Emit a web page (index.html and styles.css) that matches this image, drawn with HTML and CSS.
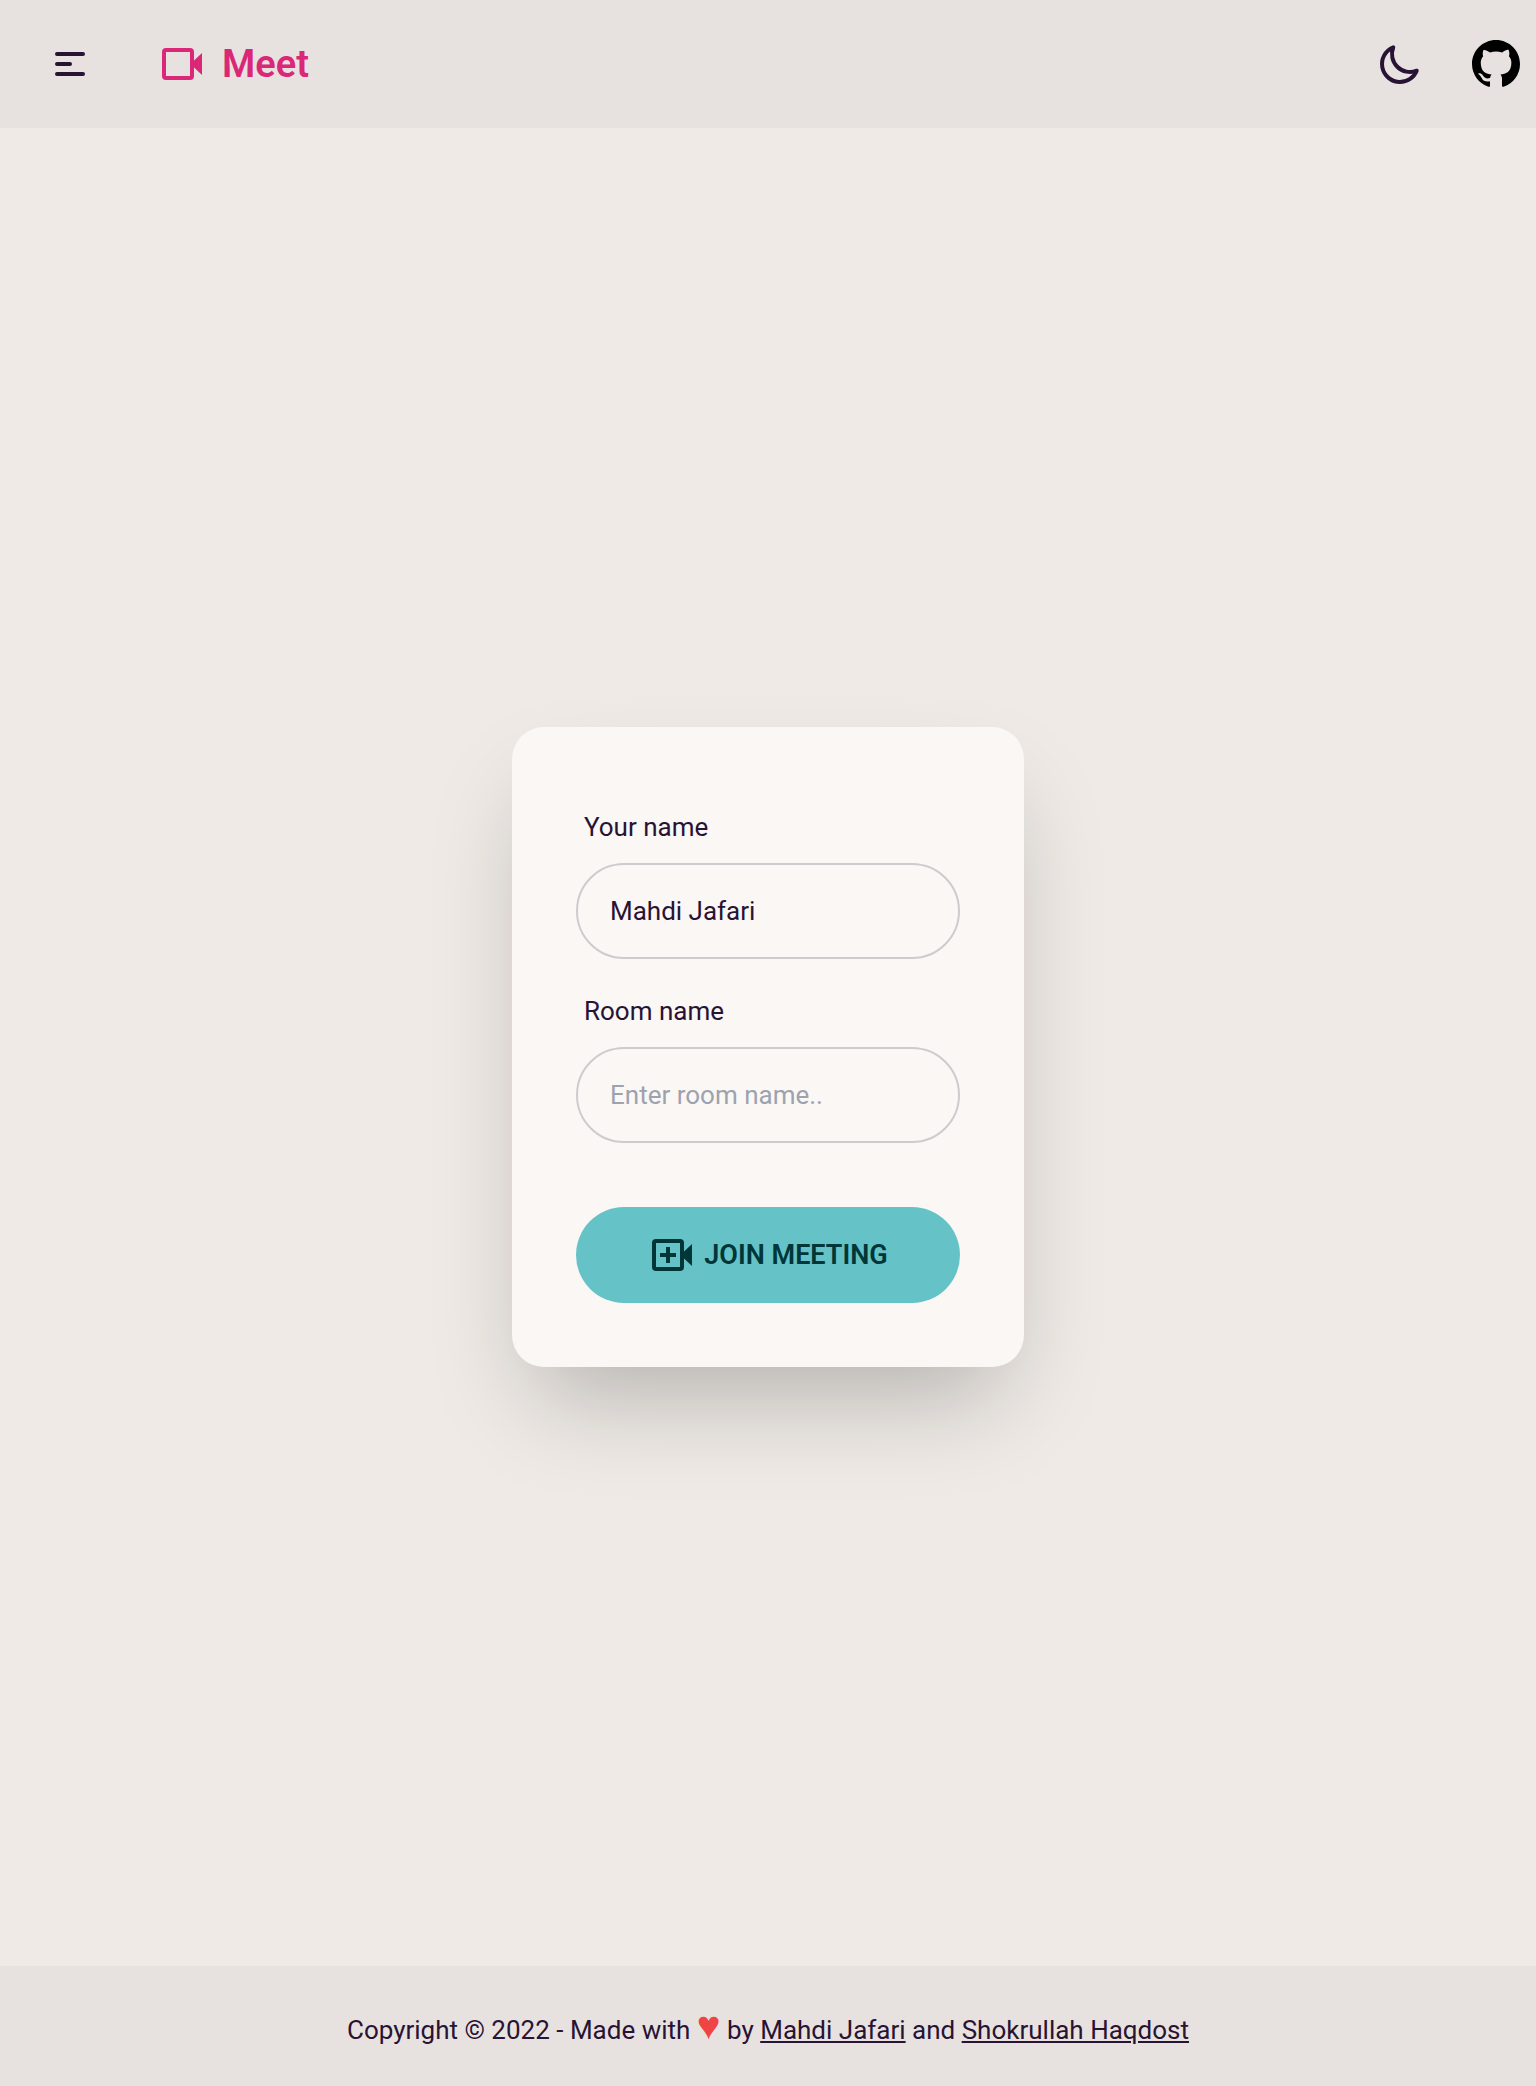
FILE: index.html
```html
<!DOCTYPE html>
<html lang="en">
<head>
<meta charset="utf-8">
<meta name="viewport" content="width=device-width, initial-scale=1">
<title>Meet</title>
<link rel="stylesheet" href="styles.css">
</head>
<body>
<header class="navbar">
  <button class="icon-button menu" type="button" aria-label="Menu">
    <svg class="icon" viewBox="0 0 48 48" fill="none" stroke="currentColor" stroke-width="4" stroke-linecap="round"><path d="M11 14h26M11 24h13M11 34h26"/></svg>
  </button>
  <a class="brand" href="#">
    <svg class="icon" viewBox="0 0 48 48" fill="none"><rect x="6" y="10" width="28" height="28" rx="2" stroke="currentColor" stroke-width="4"/><path d="M36 20.5 44 13v22l-8-7.500z" fill="currentColor"/></svg>
    <span>Meet</span>
  </a>
  <div class="actions">
    <button class="icon-button" type="button" aria-label="Toggle theme">
      <svg class="icon" viewBox="0 0 24 24" fill="none" stroke="currentColor" stroke-width="2" stroke-linecap="round" stroke-linejoin="round"><path d="M20.354 15.354A9 9 0 018.646 3.646 9.003 9.003 0 0012 21a9.003 9.003 0 008.354-5.646z"/></svg>
    </button>
    <a class="github" href="#" aria-label="GitHub">
      <svg class="icon" viewBox="0 0 16 16" fill="currentColor"><path d="M8 0C3.58 0 0 3.58 0 8c0 3.54 2.29 6.53 5.47 7.59.4.07.55-.17.55-.38 0-.19-.01-.82-.01-1.490-2.010.37-2.530-.49-2.690-.94-.09-.23-.48-.94-.82-1.130-.28-.15-.68-.52-.01-.53.63-.01 1.080.58 1.230.82.72 1.210 1.870.87 2.330.66.07-.52.28-.87.51-1.070-1.780-.2-3.640-.89-3.640-3.950 0-.87.31-1.590.82-2.150-.08-.2-.36-1.020.08-2.120 0 0 .67-.21 2.200.82.64-.18 1.320-.27 2-.27s1.360.09 2 .27c1.530-1.040 2.200-.82 2.200-.82.44 1.100.16 1.920.08 2.120.51.56.82 1.270.82 2.150 0 3.070-1.870 3.750-3.650 3.950.29.25.54.73.54 1.480 0 1.070-.01 1.930-.01 2.200 0 .21.15.46.55.38A8.010 8.010 0 0016 8c0-4.420-3.580-8-8-8z"/></svg>
    </a>
  </div>
</header>

<main class="content">
  <form class="card">
    <div class="field">
      <label for="user-name">Your name</label>
      <input id="user-name" type="text" value="Mahdi Jafari">
    </div>
    <div class="field">
      <label for="room-name">Room name</label>
      <input id="room-name" type="text" placeholder="Enter room name..">
    </div>
    <button class="join" type="button">
      <svg class="icon" viewBox="0 0 48 48" fill="none"><rect x="6" y="10" width="28" height="28" rx="2" stroke="currentColor" stroke-width="4"/><path d="M36 20.5 44 13v22l-8-7.500z" fill="currentColor"/><path d="M20 16v16M12 24h16" stroke="currentColor" stroke-width="4"/></svg>
      <span>JOIN MEETING</span>
    </button>
  </form>
</main>

<footer class="footer">
  <p>Copyright © 2022 - Made with <span class="heart">♥</span> by <a href="#">Mahdi Jafari</a> and <a href="#">Shokrullah Haqdost</a></p>
</footer>
</body>
</html>
```
FILE: styles.css
```css
* {
  box-sizing: border-box;
}

body {
  display: flex;
  flex-direction: column;
  min-height: 100vh;
  margin: 0;
  background: #efeae6;
  color: #291334;
  font-family: Roboto, "Liberation Sans", sans-serif;
  font-size: 26px;
  line-height: 40px;
}

button,
input {
  font: inherit;
  color: inherit;
}

button {
  cursor: pointer;
}

a {
  color: inherit;
}

.icon {
  display: block;
  flex: none;
  width: 48px;
  height: 48px;
}

.navbar {
  display: flex;
  align-items: center;
  padding: 16px;
  background: #e7e2df;
}

.icon-button {
  display: flex;
  align-items: center;
  justify-content: center;
  width: 96px;
  height: 96px;
  padding: 0;
  border: 0;
  background: none;
}

.menu {
  width: 108px;
}

.brand {
  display: flex;
  align-items: center;
  gap: 16px;
  margin-left: 34px;
  color: #db2777;
  font-size: 38px;
  font-weight: 600;
  text-decoration: none;
}

.actions {
  display: flex;
  align-items: center;
  gap: 24px;
  margin-left: auto;
}

.github {
  color: #000;
}

.content {
  display: flex;
  flex: 1;
  align-items: center;
  justify-content: center;
}

.card {
  display: flex;
  flex-direction: column;
  gap: 16px;
  width: 512px;
  max-width: 100%;
  padding: 64px;
  border-radius: 32px;
  background: #faf7f5;
  box-shadow: 0 50px 100px -24px rgb(0 0 0 / 25%);
}

.field {
  display: flex;
  flex-direction: column;
}

.field label {
  padding: 16px 8px;
}

.field input {
  width: 100%;
  height: 96px;
  padding: 0 32px;
  border: 2px solid #d0cace;
  border-radius: 48px;
  background: transparent;
}

.field input::placeholder {
  color: #9ca3af;
  opacity: 1;
}

.join {
  display: flex;
  align-items: center;
  justify-content: center;
  gap: 8px;
  height: 96px;
  margin-top: 48px;
  padding: 0 32px;
  border: 0;
  border-radius: 48px;
  background: #65c3c8;
  color: #003638;
  font-size: 27px;
  font-weight: 600;
}

.footer {
  padding: 44px 32px 36px;
  background: #e7e2df;
  text-align: center;
}

.footer p {
  margin: 0;
}

.heart {
  color: #ef4444;
  font-family: "Liberation Sans", sans-serif;
  font-size: 40px;
  line-height: 0;
}
```
